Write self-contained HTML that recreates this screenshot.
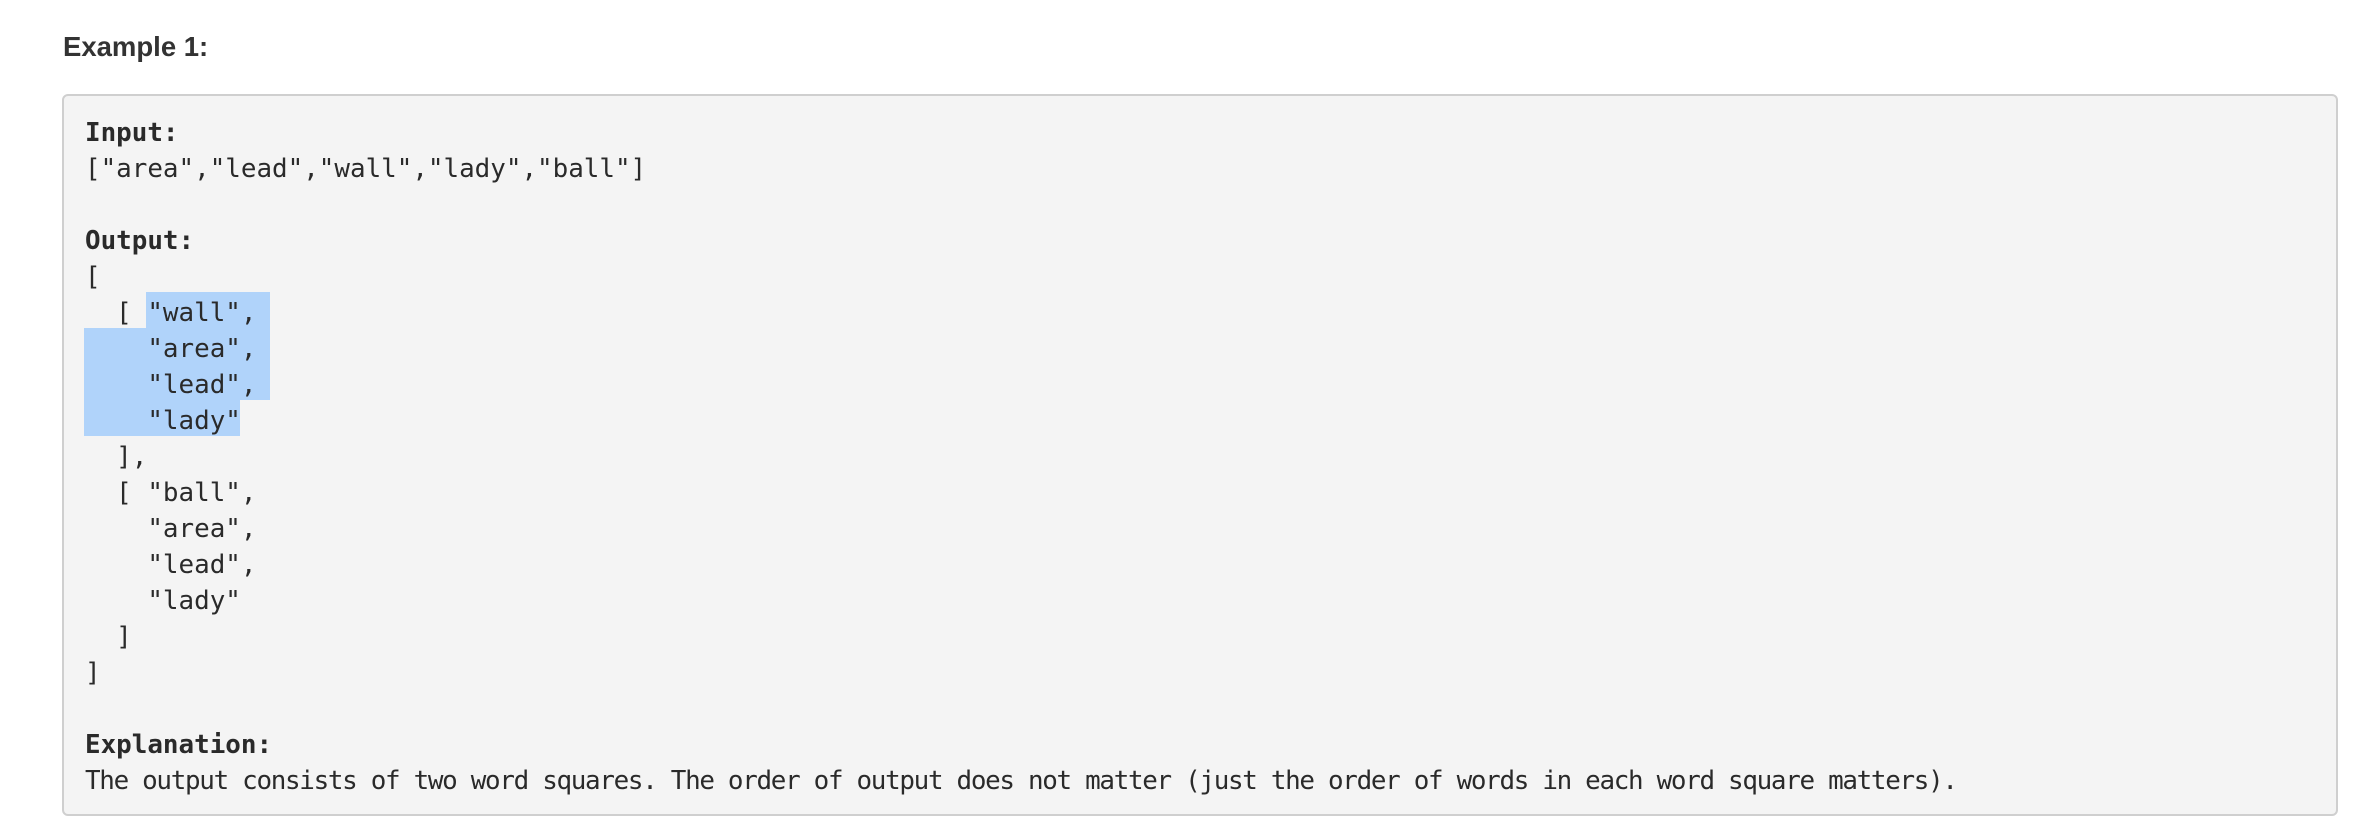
<!DOCTYPE html>
<html><head><meta charset="utf-8"><style>
html,body{margin:0;padding:0;background:#fff;width:2372px;height:836px;overflow:hidden}
h3{position:absolute;left:63px;top:0;margin:0;font:bold 27.5px/1 "Liberation Sans",sans-serif;color:#333;top:33px;height:20px}
.box{position:absolute;left:62px;top:94px;width:2276px;height:722px;background:#f4f4f4;border:2px solid #cfcfcf;border-radius:6px;box-sizing:border-box}
pre{position:absolute;left:85px;top:115px;margin:0;font:25.9px/36px "DejaVu Sans Mono",monospace;color:#2a2a2a;white-space:pre}
b{font-weight:bold}
.ex{letter-spacing:-1.3px}
.hl{position:absolute;background:#b0d3fa}
</style></head><body>
<h3>Example 1:</h3>
<div class="box"></div>
<div class="hl" style="left:146px;top:292px;width:124px;height:36px"></div>
<div class="hl" style="left:84px;top:328px;width:186px;height:72px"></div>
<div class="hl" style="left:84px;top:400px;width:156px;height:36px"></div>
<pre><b>Input:</b>
["area","lead","wall","lady","ball"]

<b>Output:</b>
[
  [ "wall",
    "area",
    "lead",
    "lady"
  ],
  [ "ball",
    "area",
    "lead",
    "lady"
  ]
]

<b>Explanation:</b>
<span class="ex">The output consists of two word squares. The order of output does not matter (just the order of words in each word square matters).</span></pre>
</body></html>
